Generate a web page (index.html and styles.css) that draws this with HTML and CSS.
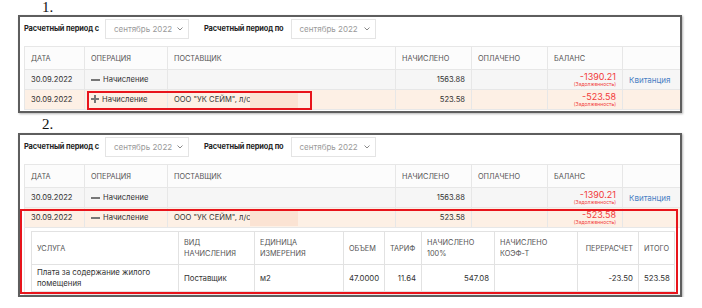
FILE: index.html
```html
<!DOCTYPE HTML>
<html>
<head>
  <meta charset="UTF-8">
  <title>Начисления</title>
  <link rel="stylesheet" href="styles.css">
</head>
<body>
  <div class="doc">
    <div class="num">1.</div>
    <div class="shot shot-1">
      <div class="filters">
        <span class="label">Расчетный период с</span>
        <span class="select">сентябрь 2022 <svg width="6" height="4" viewBox="0 0 6 4"><polyline points="0.5,0.5 3,3 5.5,0.5" fill="none" stroke="#888" stroke-width="1"/></svg></span>
        <span class="label label-to">Расчетный период по</span>
        <span class="select select-to">сентябрь 2022 <svg width="6" height="4" viewBox="0 0 6 4"><polyline points="0.5,0.5 3,3 5.5,0.5" fill="none" stroke="#888" stroke-width="1"/></svg></span>
      </div>
      <table class="grid">
        <colgroup>
          <col class="c-date"><col class="c-op"><col class="c-sup"><col class="c-sum"><col class="c-sum"><col class="c-bal"><col class="c-link">
        </colgroup>
        <tr class="head">
          <th>Дата</th><th>Операция</th><th>Поставщик</th><th>Начислено</th><th>Оплачено</th><th>Баланс</th><th></th>
        </tr>
        <tr class="row-total">
          <td>30.09.2022</td>
          <td><span class="minus"></span>Начисление</td>
          <td></td>
          <td class="num-cell">1563.88</td>
          <td></td>
          <td class="num-cell"><div class="bal">-1390.21</div><div class="debt">(Задолженность)</div></td>
          <td><a class="link">Квитанция</a></td>
        </tr>
        <tr class="row-sup">
          <td>30.09.2022</td>
          <td><svg class="plus" width="8" height="8" viewBox="0 0 8 8"><rect x="3" y="0" width="2" height="8" fill="#777"/><rect x="0" y="3" width="8" height="2" fill="#777"/></svg>Начисление</td>
          <td>ООО "УК СЕЙМ", л/с<span class="hidden-acc"></span></td>
          <td class="num-cell">523.58</td>
          <td></td>
          <td class="num-cell"><div class="bal">-523.58</div><div class="debt">(Задолженность)</div></td>
          <td></td>
        </tr>
      </table>
      <div class="mark mark-1"></div>
    </div>

    <div class="num num-2">2.</div>
    <div class="shot shot-2">
      <div class="filters">
        <span class="label">Расчетный период с</span>
        <span class="select">сентябрь 2022 <svg width="6" height="4" viewBox="0 0 6 4"><polyline points="0.5,0.5 3,3 5.5,0.5" fill="none" stroke="#888" stroke-width="1"/></svg></span>
        <span class="label label-to">Расчетный период по</span>
        <span class="select select-to">сентябрь 2022 <svg width="6" height="4" viewBox="0 0 6 4"><polyline points="0.5,0.5 3,3 5.5,0.5" fill="none" stroke="#888" stroke-width="1"/></svg></span>
      </div>
      <table class="grid">
        <colgroup>
          <col class="c-date"><col class="c-op"><col class="c-sup"><col class="c-sum"><col class="c-sum"><col class="c-bal"><col class="c-link">
        </colgroup>
        <tr class="head">
          <th>Дата</th><th>Операция</th><th>Поставщик</th><th>Начислено</th><th>Оплачено</th><th>Баланс</th><th></th>
        </tr>
        <tr class="row-total">
          <td>30.09.2022</td>
          <td><span class="minus"></span>Начисление</td>
          <td></td>
          <td class="num-cell">1563.88</td>
          <td></td>
          <td class="num-cell"><div class="bal">-1390.21</div><div class="debt">(Задолженность)</div></td>
          <td><a class="link">Квитанция</a></td>
        </tr>
        <tr class="row-sup">
          <td>30.09.2022</td>
          <td><span class="minus"></span>Начисление</td>
          <td>ООО "УК СЕЙМ", л/с<span class="hidden-acc"></span></td>
          <td class="num-cell">523.58</td>
          <td></td>
          <td class="num-cell"><div class="bal">-523.58</div><div class="debt">(Задолженность)</div></td>
          <td></td>
        </tr>
        <tr class="row-detail">
          <td colspan="7">
            <table class="details">
              <colgroup>
                <col class="d-name"><col class="d-kind"><col class="d-unit"><col class="d-vol"><col class="d-rate"><col class="d-full"><col class="d-coef"><col class="d-re"><col class="d-total">
              </colgroup>
              <tr class="head">
                <th>Услуга</th><th>Вид начисления</th><th>Единица измерения</th><th>Объем</th><th>Тариф</th><th>Начислено 100%</th><th>Начислено коэф-т</th><th class="right">Перерасчет</th><th>Итого</th>
              </tr>
              <tr>
                <td>Плата за содержание жилого помещения</td>
                <td>Поставщик</td>
                <td>м2</td>
                <td>47.0000</td>
                <td class="num-cell">11.64</td>
                <td class="num-cell">547.08</td>
                <td></td>
                <td class="num-cell">-23.50</td>
                <td class="num-cell">523.58</td>
              </tr>
            </table>
          </td>
        </tr>
      </table>
      <div class="mark mark-2"></div>
    </div>
  </div>
</body>
</html>
```

FILE: styles.css
```css
body {
  margin: 0;
  background: #fff;
  font-family: Inter, "Liberation Sans", sans-serif;
  color: #333;
}

.doc {
  width: 664px;
  padding-left: 18px;
}

.num {
  height: 15px;
  padding-left: 24px;
  font-family: "Liberation Serif", serif;
  font-size: 15px;
  line-height: 15px;
  color: #111;
}

.num-2 {
  height: 20px;
  line-height: 22px;
}

.shot {
  position: relative;
  box-sizing: border-box;
  height: 98px;
  padding: 0 0 0 4px;
  border: 2px solid #5e5e5e;
  box-shadow: 1px 1px 2px #b5b5b5;
  overflow: hidden;
}

.shot-2 {
  height: 164px;
}

.filters {
  display: flex;
  align-items: center;
  height: 23px;
}

.label {
  font-size: 7.4px;
  font-weight: 700;
  letter-spacing: -0.1px;
  color: #222;
}

.label-to {
  margin-left: 15px;
}

.select {
  display: flex;
  align-items: center;
  justify-content: space-between;
  box-sizing: border-box;
  width: 84px;
  height: 20px;
  margin-left: 6px;
  padding: 0 5px 0 8px;
  border: 1px solid #e4e4e4;
  font-size: 8px;
  color: #9a9a9a;
}

.select-to {
  width: 85px;
  margin-left: 7px;
}

.grid {
  width: 656px;
  margin-top: 6px;
  border-collapse: collapse;
  table-layout: fixed;
  font-size: 7.6px;
}

.c-date { width: 60px; }
.c-op { width: 83px; }
.c-sup { width: 228px; }
.c-sum { width: 76px; }
.c-bal { width: 75px; }
.c-link { width: 58px; }

.grid th,
.grid td {
  padding: 0 6px;
  border: 1px solid #e7e7e7;
  text-align: left;
  vertical-align: middle;
  white-space: nowrap;
}

.grid th {
  font-weight: 400;
  font-size: 7.3px;
  text-transform: uppercase;
  color: #555;
}

.grid .head {
  height: 23px;
  background: #fcfcfc;
}

.row-total {
  height: 20px;
  background: #f6f6f6;
}

.row-sup {
  height: 20px;
  background: #fdf0e5;
}

.grid .num-cell {
  text-align: right;
}

.minus {
  display: inline-block;
  width: 9px;
  height: 2px;
  margin-right: 3px;
  background: #777;
  vertical-align: middle;
}

.plus {
  margin-right: 3px;
  vertical-align: -1px;
}

.hidden-acc {
  display: inline-block;
  width: 48px;
  height: 16px;
  background: #fbe3d3;
  vertical-align: middle;
}

.bal {
  font-size: 9px;
  line-height: 9px;
  color: #f23a3a;
}

.debt {
  font-size: 5px;
  line-height: 6px;
  color: #f23a3a;
}

.link {
  font-size: 8px;
  color: #4a7fc4;
}

.grid .row-detail td {
  padding: 3px 6px 2px 6px;
  background: #fff;
}

.details {
  width: 643px;
  border-collapse: collapse;
  table-layout: fixed;
  font-size: 7.8px;
}

.d-name { width: 147px; }
.d-kind { width: 76px; }
.d-unit { width: 89px; }
.d-vol { width: 41px; }
.d-rate { width: 37px; }
.d-full { width: 73px; }
.d-coef { width: 83px; }
.d-re { width: 61px; }
.d-total { width: 36px; }

.grid .details th,
.grid .details td {
  padding: 0 5px;
  border: 1px solid #e2e2e2;
  white-space: normal;
  line-height: 11px;
}

.grid .details .head {
  height: 33px;
  background: #fff;
}

.details tr {
  height: 27px;
}

.grid .details .right {
  text-align: right;
}

.mark {
  position: absolute;
  box-sizing: border-box;
  border: 2px solid #e8141b;
}

.mark-1 {
  left: 67px;
  top: 74px;
  width: 225px;
  height: 19px;
}

.mark-2 {
  left: 0;
  top: 74px;
  width: 658px;
  height: 85px;
}
```
